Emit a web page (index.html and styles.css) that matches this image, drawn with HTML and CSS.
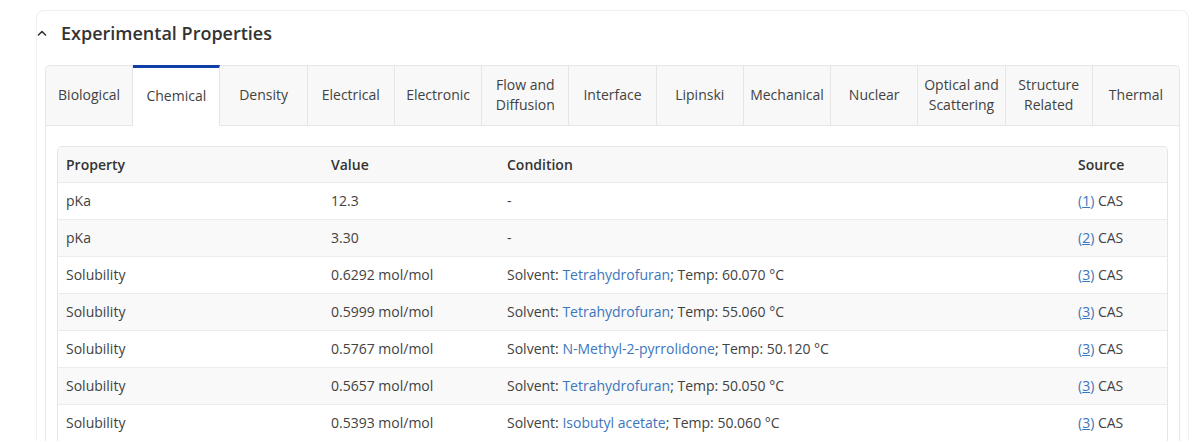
FILE: index.html
```html
<!DOCTYPE html>
<html lang="en">
<head>
    <meta charset="UTF-8">
    <meta name="viewport" content="width=device-width, initial-scale=1.0">
    <title>Experimental Properties</title>
    <link rel="stylesheet" href="styles.css">
</head>
<body>
    <div class="section">
        <div class="section-header">
            <svg class="chevron" width="10" height="6" viewBox="0 0 10 6">
                <path d="M1.5 5 L5 1.5 L8.5 5" fill="none" stroke="#333" stroke-width="1.6" stroke-linecap="round" stroke-linejoin="round"/>
            </svg>
            <h2>Experimental Properties</h2>
        </div>

        <div class="tab-panel">
            <div class="tabs">
                <div class="tab">Biological</div>
                <div class="tab active">Chemical</div>
                <div class="tab">Density</div>
                <div class="tab">Electrical</div>
                <div class="tab">Electronic</div>
                <div class="tab">Flow and Diffusion</div>
                <div class="tab">Interface</div>
                <div class="tab">Lipinski</div>
                <div class="tab">Mechanical</div>
                <div class="tab">Nuclear</div>
                <div class="tab">Optical and Scattering</div>
                <div class="tab">Structure Related</div>
                <div class="tab">Thermal</div>
            </div>

            <div class="tab-content">
                <div class="table-wrap">
                    <table>
                        <colgroup>
                            <col class="col-prop">
                            <col class="col-value">
                            <col class="col-cond">
                            <col class="col-source">
                        </colgroup>
                        <thead>
                            <tr>
                                <th>Property</th>
                                <th>Value</th>
                                <th>Condition</th>
                                <th>Source</th>
                            </tr>
                        </thead>
                        <tbody>
                            <tr>
                                <td>pKa</td>
                                <td>12.3</td>
                                <td>-</td>
                                <td><span class="ref">(<a href="#">1</a>)</span> CAS</td>
                            </tr>
                            <tr>
                                <td>pKa</td>
                                <td>3.30</td>
                                <td>-</td>
                                <td><span class="ref">(<a href="#">2</a>)</span> CAS</td>
                            </tr>
                            <tr>
                                <td>Solubility</td>
                                <td>0.6292 mol/mol</td>
                                <td>Solvent: <a class="term" href="#">Tetrahydrofuran</a>; Temp: 60.070 °C</td>
                                <td><span class="ref">(<a href="#">3</a>)</span> CAS</td>
                            </tr>
                            <tr>
                                <td>Solubility</td>
                                <td>0.5999 mol/mol</td>
                                <td>Solvent: <a class="term" href="#">Tetrahydrofuran</a>; Temp: 55.060 °C</td>
                                <td><span class="ref">(<a href="#">3</a>)</span> CAS</td>
                            </tr>
                            <tr>
                                <td>Solubility</td>
                                <td>0.5767 mol/mol</td>
                                <td>Solvent: <a class="term" href="#">N-Methyl-2-pyrrolidone</a>; Temp: 50.120 °C</td>
                                <td><span class="ref">(<a href="#">3</a>)</span> CAS</td>
                            </tr>
                            <tr>
                                <td>Solubility</td>
                                <td>0.5657 mol/mol</td>
                                <td>Solvent: <a class="term" href="#">Tetrahydrofuran</a>; Temp: 50.050 °C</td>
                                <td><span class="ref">(<a href="#">3</a>)</span> CAS</td>
                            </tr>
                            <tr>
                                <td>Solubility</td>
                                <td>0.5393 mol/mol</td>
                                <td>Solvent: <a class="term" href="#">Isobutyl acetate</a>; Temp: 50.060 °C</td>
                                <td><span class="ref">(<a href="#">3</a>)</span> CAS</td>
                            </tr>
                        </tbody>
                    </table>
                </div>
            </div>
        </div>
    </div>
</body>
</html>
```

FILE: styles.css
```css
* {
    margin: 0;
    padding: 0;
    box-sizing: border-box;
    font-family: 'Open Sans', 'Noto Sans', sans-serif;
}

body {
    background: white;
    color: #424242;
}

.section {
    margin: 10px 13px 0 36px;
    padding: 0 8px;
    border: 1px solid #f0f0f0;
    border-bottom: none;
    border-radius: 8px 8px 0 0;
}

.section-header {
    display: flex;
    align-items: center;
    height: 54px;
    padding-bottom: 11px;
    margin-left: -8px;
}

.chevron {
    margin: 1px 14px 0 0;
}

.section-header h2 {
    font-size: 18px;
    font-weight: 600;
    color: #333;
}

.tab-panel {
    border: 1px solid #e6e6e6;
    border-bottom: none;
    border-radius: 5px 5px 0 0;
}

.tabs {
    display: flex;
    height: 60px;
}

.tab {
    flex: 1;
    display: flex;
    align-items: center;
    justify-content: center;
    text-align: center;
    font-size: 14px;
    line-height: 20px;
    color: #424242;
    background: #f8f8f8;
    border-right: 1px solid #e6e6e6;
    border-bottom: 1px solid #e6e6e6;
    padding: 0 4px 1px;
}

.tab:first-child {
    border-top-left-radius: 5px;
}

.tab:last-child {
    border-right: none;
    border-top-right-radius: 5px;
}

.tab.active {
    background: white;
    border-bottom-color: white;
    border-top: 3px solid #0d3fa6;
    margin-top: -1px;
}

.tab-content {
    padding: 20px 11px 0 11px;
}

.table-wrap {
    border: 1px solid #e6e6e6;
    border-bottom: none;
    border-radius: 5px 5px 0 0;
    overflow: hidden;
}

table {
    width: 100%;
    border-collapse: collapse;
    table-layout: fixed;
    font-size: 14px;
}

.col-prop { width: 265px; }
.col-value { width: 176px; }
.col-source { width: 97px; }

th {
    text-align: left;
    font-weight: 600;
    color: #333;
    background: #f8f8f8;
    height: 35px;
    padding: 0 8px;
}

td {
    height: 37px;
    padding: 0 8px;
    border-top: 1px solid #ececec;
    white-space: nowrap;
}

tbody tr:nth-child(even) td {
    background: #f9f9f9;
}

.term {
    color: #3c76bd;
    text-decoration: none;
}

.ref {
    color: #3c76bd;
}

.ref a {
    color: #3c76bd;
    text-decoration: underline;
}
```
